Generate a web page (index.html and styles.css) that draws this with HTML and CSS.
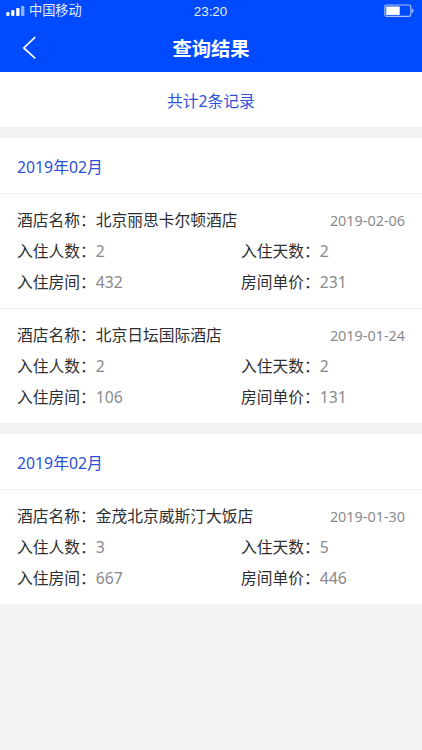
FILE: index.html
```html
<!DOCTYPE html>
<html lang="zh-CN">
<head>
    <meta charset="UTF-8">
    <meta name="viewport" content="width=device-width, initial-scale=1.0">
    <title>查询结果</title>
    <link rel="stylesheet" href="styles.css">
</head>
<body>
    <header class="header">
        <div class="status-bar">
            <div class="carrier">
                <svg class="signal" width="20" height="12" viewBox="0 0 20 12">
                    <rect x="0.3" y="7" width="3.2" height="4" rx="1.2" fill="#fff"/>
                    <rect x="5.2" y="5" width="3.2" height="6" rx="1" fill="#fff"/>
                    <rect x="10.2" y="3" width="3.3" height="8" rx="0.8" fill="#fff"/>
                    <rect x="15" y="1" width="3.4" height="10" rx="0.8" fill="#8fb0ff"/>
                </svg>
                <span>中国移动</span>
            </div>
            <div class="time">23:20</div>
            <svg class="battery" width="31" height="14" viewBox="0 0 31 14">
                <rect x="0.8" y="1" width="26" height="11.4" rx="1.8" fill="none" stroke="#a9c2ff" stroke-width="1.2"/>
                <rect x="2.2" y="2.5" width="13.5" height="8.4" fill="#fff"/>
                <path d="M28.2 4.7c1.5 0.5 1.5 3.5 0 4z" fill="#a9c2ff" stroke="#a9c2ff" stroke-width="0.6"/>
            </svg>
        </div>
        <div class="nav-bar">
            <svg class="back" width="15" height="24" viewBox="0 0 15 24">
                <path d="M13.2 1.2L1.8 12L13.2 22.4" fill="none" stroke="#fff" stroke-width="1.7"/>
            </svg>
            <h1>查询结果</h1>
        </div>
    </header>

    <div class="total">共计2条记录</div>

    <section class="month">
        <h2>2019年02月</h2>
        <div class="record">
            <div class="row">
                <div class="name">酒店名称：北京丽思卡尔顿酒店</div>
                <div class="date">2019-02-06</div>
            </div>
            <div class="row">
                <div class="col">入住人数：<span>2</span></div>
                <div class="col">入住天数：<span>2</span></div>
            </div>
            <div class="row">
                <div class="col">入住房间：<span>432</span></div>
                <div class="col">房间单价：<span>231</span></div>
            </div>
        </div>
        <div class="record">
            <div class="row">
                <div class="name">酒店名称：北京日坛国际酒店</div>
                <div class="date">2019-01-24</div>
            </div>
            <div class="row">
                <div class="col">入住人数：<span>2</span></div>
                <div class="col">入住天数：<span>2</span></div>
            </div>
            <div class="row">
                <div class="col">入住房间：<span>106</span></div>
                <div class="col">房间单价：<span>131</span></div>
            </div>
        </div>
    </section>

    <section class="month">
        <h2>2019年02月</h2>
        <div class="record">
            <div class="row">
                <div class="name">酒店名称：金茂北京威斯汀大饭店</div>
                <div class="date">2019-01-30</div>
            </div>
            <div class="row">
                <div class="col">入住人数：<span>3</span></div>
                <div class="col">入住天数：<span>5</span></div>
            </div>
            <div class="row">
                <div class="col">入住房间：<span>667</span></div>
                <div class="col">房间单价：<span>446</span></div>
            </div>
        </div>
    </section>
</body>
</html>
```

FILE: styles.css
```css
* {
    box-sizing: border-box;
}

body {
    margin: 0;
    min-height: 100vh;
    background: #f2f2f2;
    font-family: 'Noto Sans', 'Noto Sans CJK SC', sans-serif;
    font-size: 15.75px;
    color: #2e2e32;
}

.header {
    height: 72px;
    background: #004bff;
    color: #fff;
}

.status-bar {
    display: grid;
    grid-template-columns: 1fr auto 1fr;
    align-items: center;
    height: 22px;
    padding: 0 7px 0 6px;
}

.carrier {
    display: flex;
    align-items: center;
    gap: 3px;
    font-size: 13.2px;
    line-height: 18px;
    color: #e6edff;
}

.carrier span {
    padding-bottom: 2px;
}

.time {
    font-family: 'Liberation Sans', sans-serif;
    font-size: 13.4px;
    color: #e6edff;
}

.battery {
    justify-self: end;
}

.nav-bar {
    display: grid;
    grid-template-columns: 15px 1fr 15px;
    align-items: center;
    height: 52px;
    padding: 0 22px;
}

h1 {
    margin: 0;
    padding-top: 2px;
    font-size: 19.3px;
    line-height: 28px;
    text-align: center;
}

.total {
    height: 55px;
    line-height: 59px;
    background: #fff;
    text-align: center;
    color: #2c50d8;
}

.month {
    margin-top: 11px;
    background: #fff;
}

h2 {
    margin: 0;
    height: 55px;
    padding: 0 17px;
    font-size: 15.8px;
    font-weight: normal;
    line-height: 59px;
    color: #2c50d8;
}

.record {
    height: 115px;
    padding: 11px 17px 0;
    border-top: 1px solid #f0f0f0;
}

.row {
    display: flex;
    justify-content: space-between;
    height: 31px;
    line-height: 31px;
    white-space: nowrap;
}

.date {
    font-size: 14.4px;
    color: #8a8a8e;
}

.col {
    width: 164px;
}

.col span {
    color: #8a8a8e;
}
```
